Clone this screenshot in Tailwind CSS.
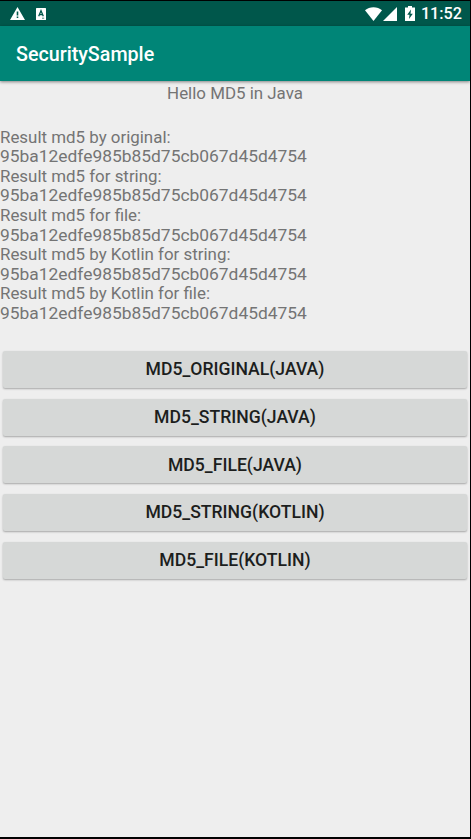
<!DOCTYPE html>
<html lang="en">
<head>
    <meta charset="UTF-8" />
    <meta name="viewport" content="width=device-width, initial-scale=1" />
    <title>SecuritySample</title>
    <script src="https://cdn.jsdelivr.net/npm/@tailwindcss/browser@4"></script>
</head>
<body class="bg-black font-[Roboto,sans-serif]">
    <div class="h-[839px] w-[471px] border-t border-r border-b-2 border-black bg-[#eeeeee] flex flex-col overflow-hidden">
        <!-- Status bar -->
        <div class="h-[25px] shrink-0 bg-[#00574b] flex items-center justify-between pl-[10px] pr-2 text-white">
            <div class="flex items-center gap-[11px]">
                <svg class="w-[15px] h-[13px]" viewBox="0 0 15 13" fill="currentColor">
                    <path fill-rule="evenodd" d="M7.5 0L15 13H0zM6.7 4.6v3.8h1.6V4.6zM6.7 9.5v1.6h1.6V9.5z"></path>
                </svg>
                <svg class="w-[10px] h-[12px]" viewBox="0 0 10 12">
                    <rect width="10" height="12" rx="0.5" fill="white"></rect>
                    <path d="M2.7 8.3L5 2.8l2.3 5.5M3.5 6.7h3" fill="none" stroke="#00574b" stroke-width="1.3"></path>
                    <path d="M6 10.2h2.2" stroke="#00574b" stroke-width="0.7"></path>
                </svg>
            </div>
            <div class="flex items-center">
                <svg class="w-[17px] h-[14px]" viewBox="0 0 17 14" fill="currentColor">
                    <path d="M8.5 14L0 3.3C2.4 1.2 5.2 0.2 8.5 0.2s6.1 1 8.5 3.1z"></path>
                </svg>
                <svg class="w-[14px] h-[14px] ml-[1px]" viewBox="0 0 14 14" fill="currentColor">
                    <path d="M14 0v14H0z"></path>
                </svg>
                <svg class="w-[10px] h-[15px] ml-2" viewBox="0 0 10 15">
                    <path d="M3 0h4v1.5h3V15H0V1.5h3z" fill="white"></path>
                    <path d="M6 3.5L2.2 8.8h2.3L4 13l3.8-5.3H5.5z" fill="#00574b"></path>
                </svg>
                <span class="ml-[6px] text-[16.2px] leading-[25px] font-medium">11:52</span>
            </div>
        </div>

        <!-- App bar -->
        <header class="h-[55px] shrink-0 bg-[#008577] flex items-center pl-4 pt-[2px] shadow-[0_1px_3px_rgba(0,0,0,0.45)]">
            <h1 class="text-white text-[19.7px] font-medium">SecuritySample</h1>
        </header>

        <main class="text-[16.9px] leading-[19.6px] text-[#747474]">
            <p class="mt-[3px] text-center">Hello MD5 in Java</p>
            <div class="mt-[24px]">
                <p>Result md5 by original:</p>
                <p class="text-[17.4px] leading-[19.6px]">95ba12edfe985b85d75cb067d45d4754</p>
                <p>Result md5 for string:</p>
                <p class="text-[17.4px] leading-[19.6px]">95ba12edfe985b85d75cb067d45d4754</p>
                <p>Result md5 for file:</p>
                <p class="text-[17.4px] leading-[19.6px]">95ba12edfe985b85d75cb067d45d4754</p>
                <p>Result md5 by Kotlin for string:</p>
                <p class="text-[17.4px] leading-[19.6px]">95ba12edfe985b85d75cb067d45d4754</p>
                <p>Result md5 by Kotlin for file:</p>
                <p class="text-[17.4px] leading-[19.6px]">95ba12edfe985b85d75cb067d45d4754</p>
            </div>

            <div class="mt-[27.4px] pl-[3px] pr-[3px] flex flex-col gap-[10.7px] text-[17.6px] font-medium text-[#1c1e1d]">
                <button class="h-[37px] pt-px rounded-[2px] bg-[#d6d8d7] shadow-[0_1px_2px_rgba(0,0,0,0.3)]">MD5_ORIGINAL(JAVA)</button>
                <button class="h-[37px] pt-px rounded-[2px] bg-[#d6d8d7] shadow-[0_1px_2px_rgba(0,0,0,0.3)]">MD5_STRING(JAVA)</button>
                <button class="h-[37px] pt-px rounded-[2px] bg-[#d6d8d7] shadow-[0_1px_2px_rgba(0,0,0,0.3)]">MD5_FILE(JAVA)</button>
                <button class="h-[37px] pt-px rounded-[2px] bg-[#d6d8d7] shadow-[0_1px_2px_rgba(0,0,0,0.3)]">MD5_STRING(KOTLIN)</button>
                <button class="h-[37px] pt-px rounded-[2px] bg-[#d6d8d7] shadow-[0_1px_2px_rgba(0,0,0,0.3)]">MD5_FILE(KOTLIN)</button>
            </div>
        </main>
    </div>
</body>
</html>
